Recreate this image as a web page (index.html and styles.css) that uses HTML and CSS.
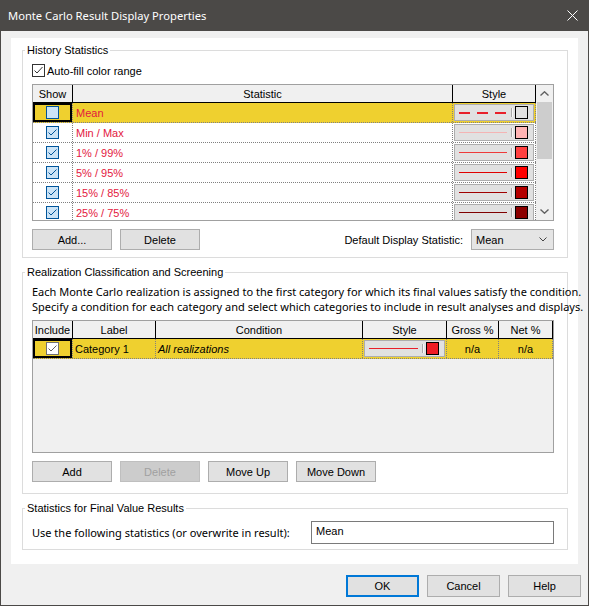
FILE: index.html
```html
<!DOCTYPE html>
<html>
<head>
<meta charset="utf-8">
<title>Monte Carlo Result Display Properties</title>
<link rel="stylesheet" href="styles.css">
</head>
<body>
<div class="window">
  <div class="titlebar">
    <span class="title">Monte Carlo Result Display Properties</span>
    <svg class="close" width="11" height="11" viewBox="0 0 11 11"><path d="M0.5 0.5L10.5 10.5M10.5 0.5L0.5 10.5" stroke="#fff" stroke-width="1" fill="none"/></svg>
  </div>
  <div class="client">
    <div class="panel">
      <fieldset class="group g-history">
        <legend>History Statistics</legend>
        <div class="check-row">
          <svg class="cb" width="13" height="13" viewBox="0 0 13 13"><rect x="0.5" y="0.5" width="12" height="12" fill="#fff" stroke="#333"/><path d="M2.5 6.5L5 9L10.5 3" fill="none" stroke="#333" stroke-width="1"/></svg>
          <span>Auto-fill color range</span>
        </div>
        <div class="grid grid-hist">
          <div class="grid-body">
            <div class="row head">
              <div class="c c-show">Show</div>
              <div class="c c-stat">Statistic</div>
              <div class="c c-style">Style</div>
            </div>
            <div class="row sel">
              <div class="c c-show focus"><svg class="cb" width="13" height="13" viewBox="0 0 13 13"><rect x="0.5" y="0.5" width="12" height="12" fill="#cce4f7" stroke="#005499"/></svg></div>
              <div class="c c-stat name">Mean</div>
              <div class="c c-style"><div class="stylebox"><span class="ln dashed"></span><span class="sep"></span><span class="sw sw-mean"></span></div></div>
            </div>
            <div class="row">
              <div class="c c-show"><svg class="cb" width="13" height="13" viewBox="0 0 13 13"><rect x="0.5" y="0.5" width="12" height="12" fill="#cce4f7" stroke="#005499"/><path d="M2.5 6.5L5 9L10.5 3.5" fill="none" stroke="#005499" stroke-width="1"/></svg></div>
              <div class="c c-stat name">Min / Max</div>
              <div class="c c-style"><div class="stylebox"><span class="ln ln-1"></span><span class="sep"></span><span class="sw sw-1"></span></div></div>
            </div>
            <div class="row">
              <div class="c c-show"><svg class="cb" width="13" height="13" viewBox="0 0 13 13"><rect x="0.5" y="0.5" width="12" height="12" fill="#cce4f7" stroke="#005499"/><path d="M2.5 6.5L5 9L10.5 3.5" fill="none" stroke="#005499" stroke-width="1"/></svg></div>
              <div class="c c-stat name">1% / 99%</div>
              <div class="c c-style"><div class="stylebox"><span class="ln ln-2"></span><span class="sep"></span><span class="sw sw-2"></span></div></div>
            </div>
            <div class="row">
              <div class="c c-show"><svg class="cb" width="13" height="13" viewBox="0 0 13 13"><rect x="0.5" y="0.5" width="12" height="12" fill="#cce4f7" stroke="#005499"/><path d="M2.5 6.5L5 9L10.5 3.5" fill="none" stroke="#005499" stroke-width="1"/></svg></div>
              <div class="c c-stat name">5% / 95%</div>
              <div class="c c-style"><div class="stylebox"><span class="ln ln-3"></span><span class="sep"></span><span class="sw sw-3"></span></div></div>
            </div>
            <div class="row">
              <div class="c c-show"><svg class="cb" width="13" height="13" viewBox="0 0 13 13"><rect x="0.5" y="0.5" width="12" height="12" fill="#cce4f7" stroke="#005499"/><path d="M2.5 6.5L5 9L10.5 3.5" fill="none" stroke="#005499" stroke-width="1"/></svg></div>
              <div class="c c-stat name">15% / 85%</div>
              <div class="c c-style"><div class="stylebox"><span class="ln ln-4"></span><span class="sep"></span><span class="sw sw-4"></span></div></div>
            </div>
            <div class="row">
              <div class="c c-show"><svg class="cb" width="13" height="13" viewBox="0 0 13 13"><rect x="0.5" y="0.5" width="12" height="12" fill="#cce4f7" stroke="#005499"/><path d="M2.5 6.5L5 9L10.5 3.5" fill="none" stroke="#005499" stroke-width="1"/></svg></div>
              <div class="c c-stat name">25% / 75%</div>
              <div class="c c-style"><div class="stylebox"><span class="ln ln-5"></span><span class="sep"></span><span class="sw sw-5"></span></div></div>
            </div>
          </div>
          <div class="vscroll">
            <div class="arrow"><svg width="9" height="5" viewBox="0 0 9 5"><path d="M0.5 4.5L4.5 0.8L8.5 4.5" fill="none" stroke="#606060" stroke-width="1.4"/></svg></div>
            <div class="track"><div class="thumb"></div></div>
            <div class="arrow"><svg width="9" height="5" viewBox="0 0 9 5"><path d="M0.5 0.5L4.5 4.2L8.5 0.5" fill="none" stroke="#606060" stroke-width="1.4"/></svg></div>
          </div>
        </div>
        <div class="btn-row">
          <div class="btn">Add...</div>
          <div class="btn">Delete</div>
          <span class="spacer"></span>
          <span class="combo-label">Default Display Statistic:</span>
          <div class="combo"><span>Mean</span><svg width="8" height="5" viewBox="0 0 8 5"><path d="M0.5 0.5L4 4L7.5 0.5" fill="none" stroke="#444" stroke-width="1"/></svg></div>
        </div>
      </fieldset>

      <fieldset class="group g-real">
        <legend>Realization Classification and Screening</legend>
        <div class="desc">
          <div class="desc-line">Each Monte Carlo realization is assigned to the first category for which its final values satisfy the condition.</div>
          <div class="desc-line">Specify a condition for each category and select which categories to include in result analyses and displays.</div>
        </div>
        <div class="grid grid-real">
          <div class="grid-body">
            <div class="row head">
              <div class="c k-inc">Include</div>
              <div class="c k-lab">Label</div>
              <div class="c k-cond">Condition</div>
              <div class="c k-style">Style</div>
              <div class="c k-gross">Gross %</div>
              <div class="c k-net">Net %</div>
            </div>
            <div class="row sel">
              <div class="c k-inc focus"><svg class="cb" width="13" height="13" viewBox="0 0 13 13"><rect x="0.5" y="0.5" width="12" height="12" fill="#fff" stroke="#707070"/><path d="M2.5 6.5L5 9L10.5 3.5" fill="none" stroke="#606060" stroke-width="1"/></svg></div>
              <div class="c k-lab txt">Category 1</div>
              <div class="c k-cond txt cond">All realizations</div>
              <div class="c k-style"><div class="stylebox"><span class="ln ln-cat"></span><span class="sep"></span><span class="sw sw-cat"></span></div></div>
              <div class="c k-gross num">n/a</div>
              <div class="c k-net num">n/a</div>
            </div>
          </div>
        </div>
        <div class="btn-row">
          <div class="btn">Add</div>
          <div class="btn disabled">Delete</div>
          <div class="btn">Move Up</div>
          <div class="btn">Move Down</div>
        </div>
      </fieldset>

      <fieldset class="group g-final">
        <legend>Statistics for Final Value Results</legend>
        <div class="final-row">
          <span class="wide-text">Use the following statistics (or overwrite in result):</span>
          <div class="textbox">Mean</div>
        </div>
      </fieldset>
    </div>
    <div class="dlg-buttons">
      <div class="btn dlg default">OK</div>
      <div class="btn dlg">Cancel</div>
      <div class="btn dlg">Help</div>
    </div>
  </div>
</div>
</body>
</html>
```

FILE: styles.css
```css
* { box-sizing: border-box; }
html, body { margin: 0; padding: 0; }
body {
  width: 589px;
  height: 606px;
  overflow: hidden;
  background: #f0f0f0;
  font-family: "Liberation Sans", Arial, sans-serif;
  font-size: 11px;
  color: #000;
}
.window {
  width: 589px;
  height: 606px;
  border: 1px solid #4b4947;
  border-top: 0;
  background: #f0f0f0;
  display: flex;
  flex-direction: column;
}
.titlebar {
  height: 31px;
  margin: 0 -1px;
  background: #4b4947;
  color: #fff;
  display: flex;
  align-items: center;
  justify-content: space-between;
  padding: 0 11px 0 8px;
  flex: none;
}
.title { font-family: "Noto Sans", sans-serif; font-size: 11.2px; }
.client {
  flex: 1;
  display: flex;
  flex-direction: column;
  padding: 7px 10px 0 10px;
}
.panel {
  background: #fff;
  height: 526px;
  padding: 5px 10px 0 11px;
}
fieldset.group {
  margin: 0;
  min-width: 0;
  border: 1px solid #dcdcdc;
  padding: 6px 13px 7px 9px;
}
fieldset.group + fieldset.group { margin-top: 7px; }
legend {
  padding: 0 2px;
  margin-left: -7px;
  line-height: 14px;
}
.check-row {
  display: flex;
  align-items: center;
  gap: 2px;
  height: 15px;
}
.cb { display: block; flex: none; }

.grid {
  border: 1px solid #a0a0a0;
  display: flex;
  width: 522px;
}
.grid-hist { margin-top: 6px; height: 137px; }
.grid-real { margin-top: 6px; height: 133px; background: #f0f0f0; }
.grid-body { flex: 1; overflow: hidden; background: #fff; }
.grid-real .grid-body { background: #f0f0f0; }
.row {
  display: flex;
  height: 20px;
  border-bottom: 1px dotted #808080;
  background: #fff;
}
.row.head {
  height: 18px;
  background: #f0f0f0;
  border-bottom: 1px solid #000;
}
.row.sel { background: #efd02f; }
.c {
  flex: none;
  border-right: 1px dotted #808080;
  display: flex;
  align-items: center;
  white-space: nowrap;
  overflow: hidden;
}
.head .c { border-right: 1px solid #000; justify-content: center; }
.c-show { width: 40px; justify-content: center; }
.c-stat { width: 380px; }
.c-style { width: 83px; padding: 1px; }
.focus { box-shadow: inset 0 0 0 2px #000; }
.name { color: #e3173e; padding-left: 3px; }

.stylebox {
  flex: 1;
  height: 17px;
  border: 1px solid #adadad;
  background: #e1e1e1;
  display: flex;
  align-items: center;
  padding-left: 4px;
}
.ln { display: block; width: 48px; height: 1px; margin-right: 4px; }
.ln.dashed { height: 2px; background: repeating-linear-gradient(to right, #e8202a 0 11px, transparent 11px 18px); }
.ln-1 { background: #f4b4b4; }
.ln-2 { background: #ee3a3a; }
.ln-3 { background: #e00000; }
.ln-4 { background: #a00000; }
.ln-5 { background: #800000; }
.ln-cat { background: #e8202a; width: 49px; }
.sep { display: block; width: 2px; height: 9px; border-left: 1px solid #a8a8a8; border-right: 1px solid #f8f8f8; margin-right: 2px; }
.sw { display: block; width: 13px; height: 13px; border: 1px solid #000; }
.sw-mean { background: #e1e1e1; }
.sw-1 { background: #ffb3b3; }
.sw-2 { background: #ff4040; }
.sw-3 { background: #ff0000; }
.sw-4 { background: #b40000; }
.sw-5 { background: #8b0000; }
.sw-cat { background: #ee1c24; }

.vscroll {
  width: 17px;
  flex: none;
  background: #f0f0f0;
  display: flex;
  flex-direction: column;
}
.arrow { height: 17px; display: flex; align-items: center; justify-content: center; flex: none; }
.track { flex: 1; padding: 0 1px; }
.thumb { height: 57px; background: #cdcdcd; }

.btn-row {
  display: flex;
  align-items: center;
  gap: 8px;
  margin-top: 8px;
  height: 21px;
}
.btn {
  width: 80px;
  height: 21px;
  border: 1px solid #adadad;
  background: #e1e1e1;
  display: flex;
  align-items: center;
  justify-content: center;
  flex: none;
}
.btn.disabled { background: #cccccc; border-color: #bfbfbf; color: #a0a0a0; }
.spacer { flex: 1; }
.combo {
  width: 83px;
  height: 21px;
  border: 1px solid #adadad;
  background: #e5e5e5;
  display: flex;
  align-items: center;
  justify-content: space-between;
  padding: 0 6px 0 4px;
}

.desc {
  margin: 0;
  white-space: nowrap;
  font-family: "Noto Sans", sans-serif;
  font-size: 11px;
}
.desc-line { height: 15px; line-height: 15px; }
.wide-text { font-family: "Noto Sans", sans-serif; font-size: 11px; }
fieldset.g-real { padding-top: 5px; padding-bottom: 11px; }
.k-inc { width: 40px; justify-content: center; }
.k-lab { width: 83px; }
.k-cond { width: 207px; }
.k-style { width: 84px; padding: 1px; }
.k-gross { width: 52px; justify-content: center; }
.k-net { width: 54px; justify-content: center; }
.txt { padding-left: 2px; }
.cond { font-style: italic; }

.final-row {
  display: flex;
  align-items: center;
  justify-content: space-between;
  height: 23px;
}
fieldset.g-final { padding-bottom: 5px; }
.textbox {
  width: 243px;
  height: 23px;
  border: 1px solid #7a7a7a;
  background: #fff;
  padding: 3px 4px;
  line-height: 13px;
}

.dlg-buttons {
  display: flex;
  justify-content: flex-end;
  gap: 8px;
  margin-top: 11px;
  margin-right: -3px;
}
.btn.dlg { width: 73px; height: 22px; }
.btn.default { border: 2px solid #0078d7; }
```
